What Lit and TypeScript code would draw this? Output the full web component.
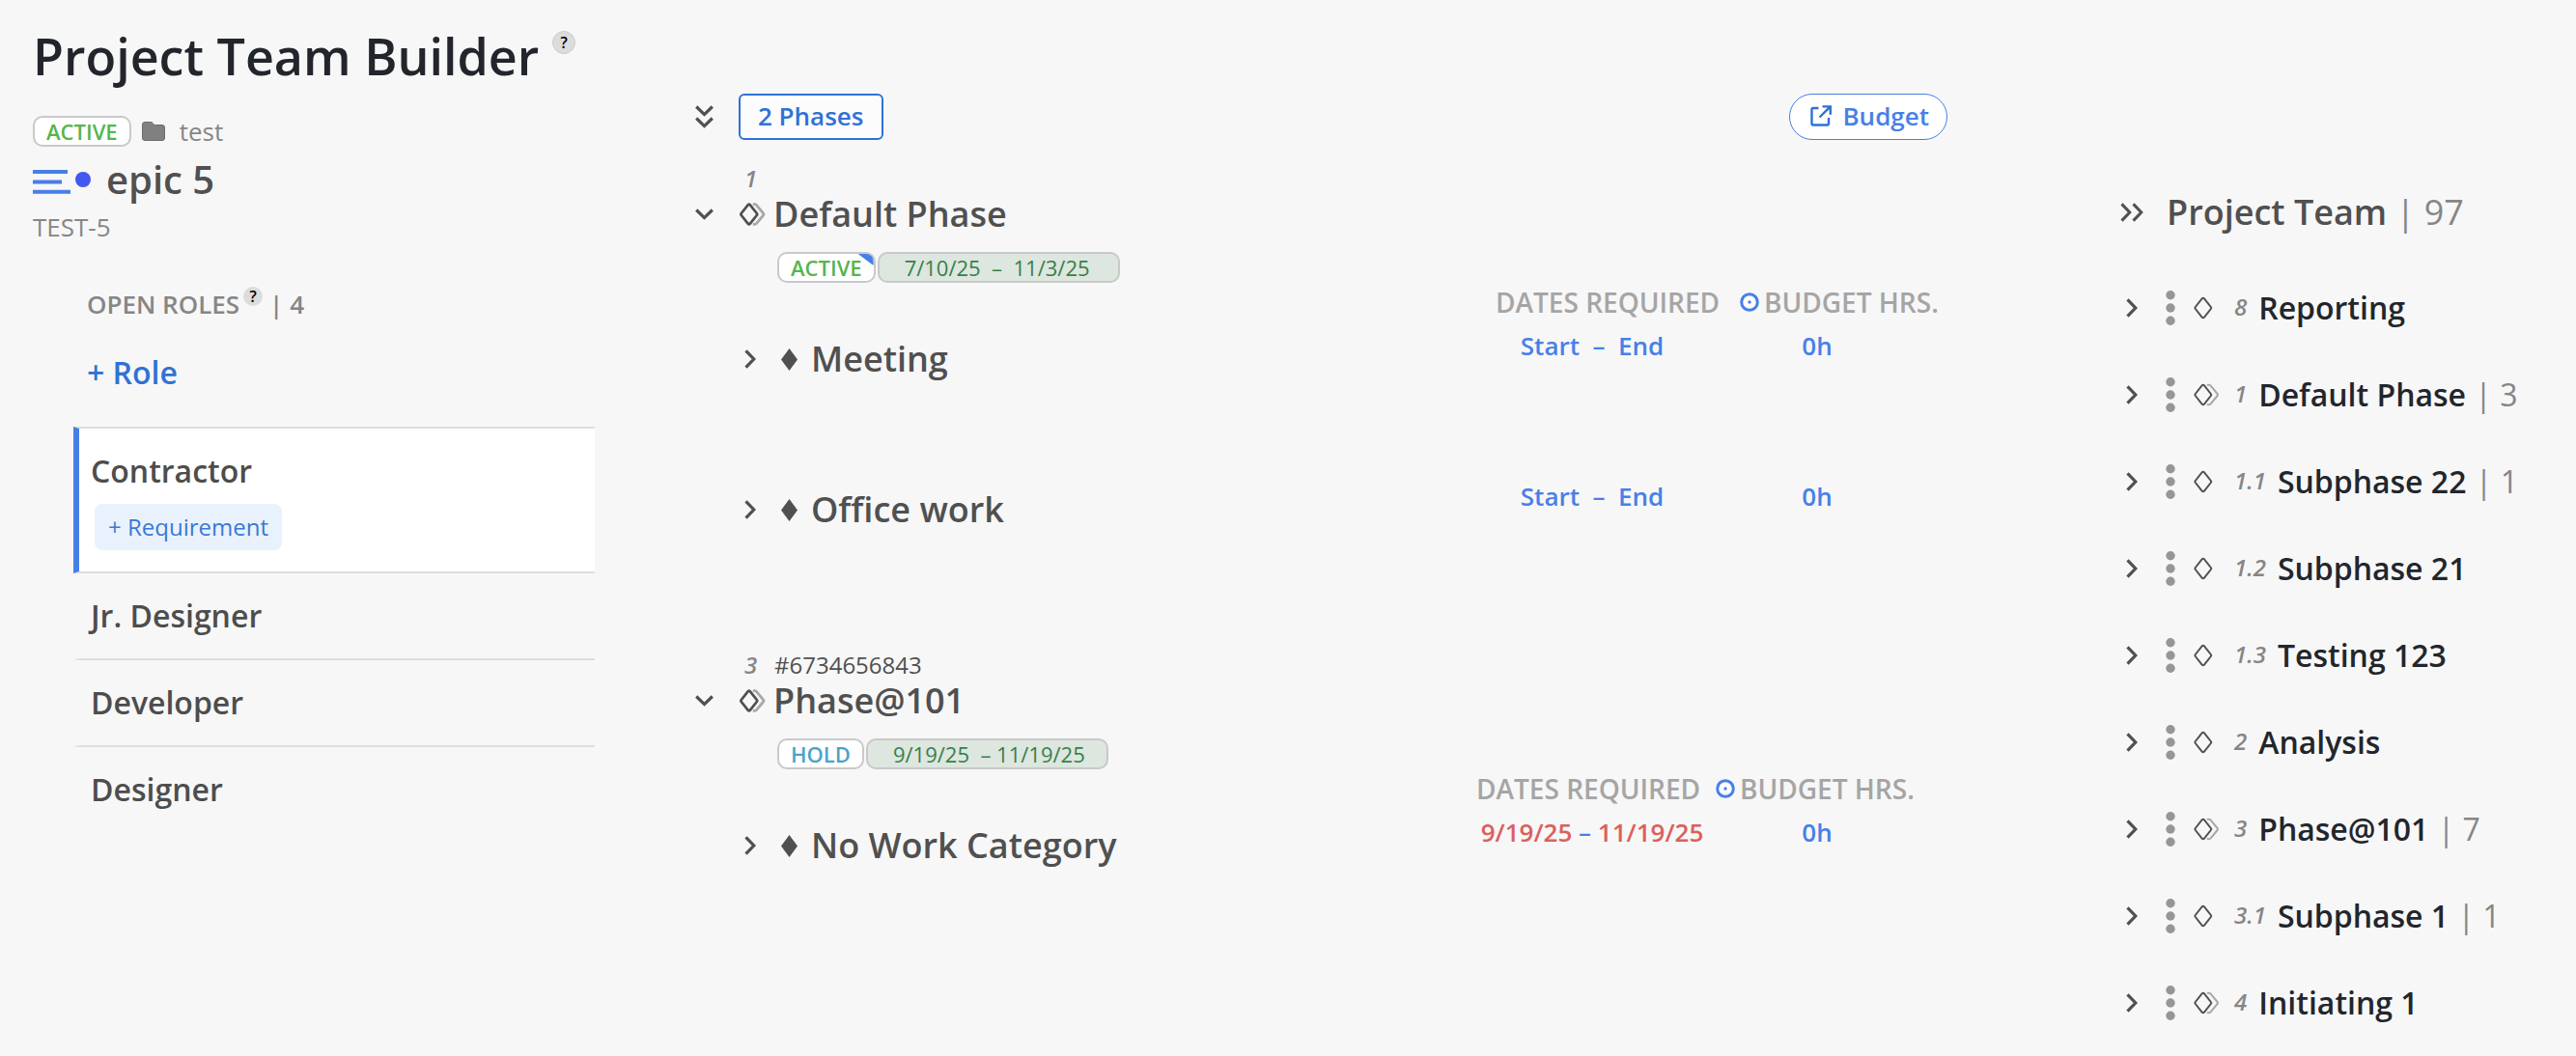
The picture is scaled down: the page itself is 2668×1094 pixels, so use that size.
import { LitElement, html, css, svg, nothing } from "lit";
import { customElement, property } from "lit/decorators.js";
import { classMap } from "lit/directives/class-map.js";

interface Work { name: string; start: string; end: string; overdue?: boolean; hours: string; }
interface Phase {
  order: string; code?: string; name: string; status: string; hold?: boolean; flagged?: boolean;
  dates: string; inset?: boolean; work: Work[];
}
interface TeamGroup { order: string; name: string; parent?: boolean; count?: number; }

const PHASES: Phase[] = [
  {
    order: "1", name: "Default Phase", status: "ACTIVE", flagged: true,
    dates: "7/10/25 \u00a0–\u00a0 11/3/25", inset: true,
    work: [
      { name: "Meeting", start: "Start\u00a0", end: "\u00a0End", hours: "0h" },
      { name: "Office work", start: "Start\u00a0", end: "\u00a0End", hours: "0h" },
    ],
  },
  {
    order: "3", code: "#6734656843", name: "Phase@101", status: "HOLD", hold: true,
    dates: "9/19/25 \u00a0– 11/19/25",
    work: [{ name: "No Work Category", start: "9/19/25", end: "11/19/25", overdue: true, hours: "0h" }],
  },
];

const TEAM: TeamGroup[] = [
  { order: "8", name: "Reporting" },
  { order: "1", name: "Default Phase", parent: true, count: 3 },
  { order: "1.1", name: "Subphase 22", count: 1 },
  { order: "1.2", name: "Subphase 21" },
  { order: "1.3", name: "Testing 123" },
  { order: "2", name: "Analysis" },
  { order: "3", name: "Phase@101", parent: true, count: 7 },
  { order: "3.1", name: "Subphase 1", count: 1 },
  { order: "4", name: "Initiating 1", parent: true },
];

const ROLES = ["Contractor", "Jr. Designer", "Developer", "Designer"];

const icon = (w: number, h: number, body: unknown) =>
  html`<svg width=${w} height=${h} viewBox="0 0 ${w} ${h}" fill="none" aria-hidden="true">${body}</svg>`;

const chevronDown = icon(19, 12, svg`<path d="M1.2 1.5 9.5 9.6 17.8 1.5" stroke="#505050" stroke-width="3.2"/>`);
const chevronRight = icon(12, 20, svg`<path d="M1.5 1.4 9.8 10 1.5 18.6" stroke="#505050" stroke-width="3.2"/>`);
const doubleDown = icon(19, 24, svg`<path d="M1.2 1.5 9.5 9.6 17.8 1.5M1.2 13.5 9.5 21.6 17.8 13.5" stroke="#505050" stroke-width="3.2"/>`);
const doubleRight = icon(24, 20, svg`<path d="M1.5 1.4 9.8 10 1.5 18.6M13.5 1.4 21.8 10 13.5 18.6" stroke="#505050" stroke-width="3"/>`);
const workDiamond = icon(17, 23, svg`<path d="M8.5 0 17 11.5 8.5 23 0 11.5Z" fill="#505050"/>`);
const phaseDiamond = (stroke: number, parent: boolean) => icon(28, 24, svg`
  ${parent ? svg`<path d="M14.8 1.7h2.2q.8 0 1.4.8l7.2 8.5q.8 1 0 2l-7.2 8.5q-.6.8-1.4.8h-2.2" stroke="#a8a8a8" stroke-width=${stroke}/>` : nothing}
  <path d="M9.8 2.2q1-1 2 0l7 8.8q.8 1 0 2l-7 8.8q-1 1-2 0l-7-8.8q-.8-1 0-2z" fill="#f7f7f7" stroke="#505050" stroke-width=${stroke}/>`);
const dots = icon(10, 36, svg`<g fill="#969696"><circle cx="5" cy="4.7" r="4.7"/><circle cx="5" cy="18" r="4.7"/><circle cx="5" cy="31.3" r="4.7"/></g>`);
const folder = icon(24, 20, svg`<path d="M.5 3q0-2.500 2.500-2.500h6.500q1 0 1.600.9l1 1.400q.5.700 1.400.700h7.500q2.500 0 2.500 2.500v11q0 2.500-2.500 2.500h-18q-2.500 0-2.500-2.500z" fill="#808080" stroke="#6c6c6c"/>`);
const epic = icon(60, 26, svg`<path d="M0 2h36M0 12.400h30M0 22.800h39" stroke="#477fe8" stroke-width="4"/><circle cx="52" cy="10" r="8" fill="#4457ee"/>`);
const launch = icon(22, 22, svg`<path d="M8.500 3H3q-1.500 0-1.500 1.500v14.500q0 1.500 1.500 1.500h14.500q1.500 0 1.500-1.500v-6" stroke="#2f72d6" stroke-width="2.400"/><path d="M12.500 1.400h8.300v8.300M20.500 1.600 9.500 12.500" stroke="#2f72d6" stroke-width="2.400"/>`);
const target = icon(20, 20, svg`<circle cx="10" cy="10" r="8.300" fill="#fff" stroke="#477fe8" stroke-width="3"/><circle cx="10" cy="10" r="1.700" fill="#477fe8"/>`);

const shared = css`
  * { box-sizing: border-box; }
  svg { display: block; flex: none; }
  h1, h2, h3, ul { margin: 0; padding: 0; }
  h1, h2, h3 { font-weight: 600; }
  ul { list-style: none; }
  button { margin: 0; padding: 0; border: 0; background: none; color: inherit; font: inherit; cursor: pointer; white-space: nowrap; }
  a { color: inherit; text-decoration: none; }
  .badge {
    display: inline-flex; align-items: center; height: 32px; padding: 0 12px; border: 2px solid #c9c9c9;
    border-radius: 10px; background: #fff; color: #55b54d; font-size: 22px; line-height: 28px; font-weight: 600; white-space: nowrap;
  }
`;

@customElement("role-panel")
export class RolePanel extends LitElement {
  static styles = [shared, css`
    :host { display: block; padding: 26px 0 0 34px; }
    .title { display: flex; gap: 14px; color: #22262c; }
    .title h1 { font-size: 52px; line-height: 64px; white-space: nowrap; }
    .help {
      width: 24px; height: 24px; border: 1px solid #ccc; border-radius: 50%; background: #dcdcdc; color: #000;
      font-size: 16px; line-height: 22px; font-weight: 600; text-align: center;
    }
    .title .help { margin-top: 6px; }
    .meta { display: flex; align-items: center; margin-top: 30px; color: #868686; font-size: 26px; line-height: 32px; }
    .meta svg { margin: 0 15px 0 11px; }
    .epic { display: flex; align-items: center; gap: 16px; margin-top: 10px; color: #505050; }
    .epic svg { margin-top: 5px; }
    .epic h2 { font-size: 40px; line-height: 48px; }
    .key { display: block; margin-top: 9px; color: #868686; font-size: 26px; line-height: 32px; }
    .open { display: flex; margin: 48px 0 0 56px; color: #868686; font-size: 26px; line-height: 32px; }
    .open h3 { font-size: 26px; }
    .open .help { width: 20px; height: 20px; margin: -2px 7px 0 4px; border: 0; line-height: 20px; }
    .add { display: block; margin: 35px 0 0 56px; color: #2f72d6; font-size: 32px; line-height: 40px; font-weight: 600; }
    .roles { margin: 36px 0 0 42px; }
    .role { padding: 24px 0 24px 12px; border-bottom: 2px solid #dedede; border-left: 6px solid transparent; color: #4d4d4d; }
    .role:last-child { border-bottom: 0; }
    .role h3 { font-size: 32px; line-height: 40px; }
    .role.selected { padding-bottom: 22px; border-top: 2px solid #dedede; border-left-color: #477fe8; background: #fff; }
    .req { display: block; height: 48px; margin: 14px 0 0 4px; padding: 0 14px; border-radius: 8px; background: #e9f2fc; color: #3a78d8; font-size: 24px; line-height: 48px; font-weight: 400; }
  `];
  render() {
    return html`
      <div class="title"><h1>Project Team Builder</h1><button class="help" aria-label="Help">?</button></div>
      <div class="meta"><span class="badge">ACTIVE</span>${folder}<a href="#test">test</a></div>
      <div class="epic">${epic}<h2>epic 5</h2></div>
      <a class="key" href="#test-5">TEST-5</a>
      <div class="open"><h3>OPEN ROLES</h3><button class="help" aria-label="About open roles">?</button><h3>| 4</h3></div>
      <button class="add">+ Role</button>
      <ul class="roles">
        ${ROLES.map((role, i) => html`
          <li class=${classMap({ role: true, selected: i === 0 })}>
            <h3>${role}</h3>
            ${i === 0 ? html`<button class="req">+ Requirement</button>` : nothing}
          </li>`)}
      </ul>`;
  }
}

@customElement("phase-section")
export class PhaseSection extends LitElement {
  @property({ attribute: false }) phase!: Phase;
  static styles = [shared, css`
    :host { display: block; color: #505050; }
    .head { display: grid; grid-template-columns: 45px 36px 1fr; align-items: center; }
    .order { grid-column: 2; padding-left: 6px; color: #868686; font-size: 24px; line-height: 28px; font-style: italic; font-weight: 600; }
    .code { padding-left: 1px; font-size: 24px; line-height: 28px; }
    .head h2 { font-size: 36px; line-height: 44px; }
    .title { padding-top: 1px; }
    .status { display: flex; gap: 2px; margin: 17px 0 0 85px; }
    .flagged { overflow: hidden; position: relative; }
    .flagged::after { content: ""; position: absolute; top: 0; right: 0; width: 16px; height: 12px; background: #477fe8; clip-path: polygon(0 0, 100% 0, 100% 100%); }
    .hold { color: #4aa3cb; }
    .range { min-width: 251px; padding: 0 20px 0 26px; background: #dde6df; color: #37804a; font-weight: 400; }
    table { width: 100%; margin-top: 2px; border-collapse: collapse; table-layout: fixed; }
    .dates { width: 240px; }
    .hours { width: 226px; }
    .rest { width: 22px; }
    th, td { padding: 0; vertical-align: top; font-weight: 600; white-space: nowrap; }
    thead th { height: 36px; color: #a5a5a5; font-size: 28px; line-height: 36px; text-align: left; }
    .colhead { display: flex; align-items: center; gap: 5px; padding-left: 8px; }
    .colhead.first { padding-left: 0; }
    .inset .colhead { padding-left: 33px; }
    .inset .colhead.first { padding-left: 20px; }
    tbody tr { height: 156px; }
    tbody td { padding-top: 11px; color: #477fe8; font-size: 26px; line-height: 32px; text-align: center; }
    .name { display: flex; align-items: center; padding: 19px 0 0 51px; text-align: left; font-size: 36px; line-height: 44px; }
    .name svg { margin-right: 26px; }
    .name > svg { margin-right: 14px; }
    .late { color: #dc5f5d; }
  `];
  render() {
    const p = this.phase;
    return html`
      <div class="head"><span class="order">${p.order}</span>${p.code ? html`<span class="code">${p.code}</span>` : nothing}</div>
      <div class="head title"><button aria-label="Collapse phase">${chevronDown}</button>${phaseDiamond(2.8, true)}<h2>${p.name}</h2></div>
      <div class="status">
        <span class=${classMap({ badge: true, flagged: !!p.flagged, hold: !!p.hold })}>${p.status}</span>
        <button class="badge range">${p.dates}</button>
      </div>
      <table>
        <colgroup><col><col class="dates"><col class="hours"><col class="rest"></colgroup>
        <thead><tr class=${classMap({ inset: !!p.inset })}>
          <td></td>
          <th scope="col"><div class="colhead first">DATES REQUIRED</div></th>
          <th scope="col"><div class="colhead">${target}BUDGET HRS.</div></th>
          <td></td>
        </tr></thead>
        <tbody>
          ${p.work.map((w) => html`<tr>
            <th scope="row"><div class="name"><button aria-label="Expand ${w.name}">${chevronRight}</button>${workDiamond}${w.name}</div></th>
            <td><button><span class=${w.overdue ? "late" : ""}>${w.start}</span> – <span class=${w.overdue ? "late" : ""}>${w.end}</span></button></td>
            <td><button>${w.hours}</button></td>
            <td></td>
          </tr>`)}
        </tbody>
      </table>`;
  }
}

@customElement("team-panel")
export class TeamPanel extends LitElement {
  static styles = [shared, css`
    :host { display: block; padding-top: 198px; color: #22262c; }
    .heading { display: flex; align-items: center; color: #505050; margin-bottom: 32px; }
    .heading h2 { margin-left: 24px; font-size: 36px; line-height: 44px; white-space: nowrap; }
    .count { color: #868686; font-weight: 400; }
    .row .count { margin-left: 1px; }
    .row { display: flex; align-items: center; height: 90px; padding-left: 6px; font-size: 32px; line-height: 40px; font-weight: 600; white-space: nowrap; }
    .grip { margin: 0 18px 0 29px; }
    .order { margin: 0 12px 0 15px; padding-bottom: 2px; color: #868686; font-size: 24px; line-height: 32px; font-style: italic; font-weight: 600; }
  `];
  render() {
    return html`
      <div class="heading"><button aria-label="Collapse project team">${doubleRight}</button><h2>Project Team <span class="count">| 97</span></h2></div>
      <ul>
        ${TEAM.map((g) => html`<li class="row">
          <button aria-label="Expand ${g.name}">${chevronRight}</button>
          <button class="grip" aria-label="Options for ${g.name}">${dots}</button>
          ${phaseDiamond(2, !!g.parent)}
          <span class="order">${g.order}</span>
          <span>${g.name}${g.count ? html` <span class="count">| ${g.count}</span>` : nothing}</span>
        </li>`)}
      </ul>`;
  }
}

@customElement("app-root")
export class AppRoot extends LitElement {
  static styles = [shared, css`
    :host { display: block; min-height: 100vh; background: #f7f7f7; font-family: "Open Sans", "Noto Sans", sans-serif; }
    .page { display: grid; grid-template-columns: 616fr 1401fr 651fr; }
    main { padding: 97px 0 0 104px; }
    team-panel { padding-left: 179px; }
    .bar { display: flex; align-items: center; margin-bottom: 26px; font-size: 26px; line-height: 32px; font-weight: 600; }
    .count { height: 48px; margin: 0 auto 0 26px; padding: 0 18px 2px; border: 2px solid #2f72d6; border-radius: 6px; background: #fcfcfc; color: #2f72d6; }
    .budget { display: flex; align-items: center; gap: 11px; height: 48px; padding: 0 18px 2px 21px; border: 1px solid #477fe8; border-radius: 24px; background: #fff; color: #477fe8; }
    phase-section + phase-section { margin-top: 32px; }
  `];
  render() {
    return html`<div class="page">
      <role-panel></role-panel>
      <main>
        <div class="bar">
          <button aria-label="Collapse all">${doubleDown}</button>
          <button class="count">2 Phases</button>
          <a class="budget" href="#budget">${launch}Budget</a>
        </div>
        ${PHASES.map((p) => html`<phase-section .phase=${p}></phase-section>`)}
      </main>
      <team-panel></team-panel>
    </div>`;
  }
}
